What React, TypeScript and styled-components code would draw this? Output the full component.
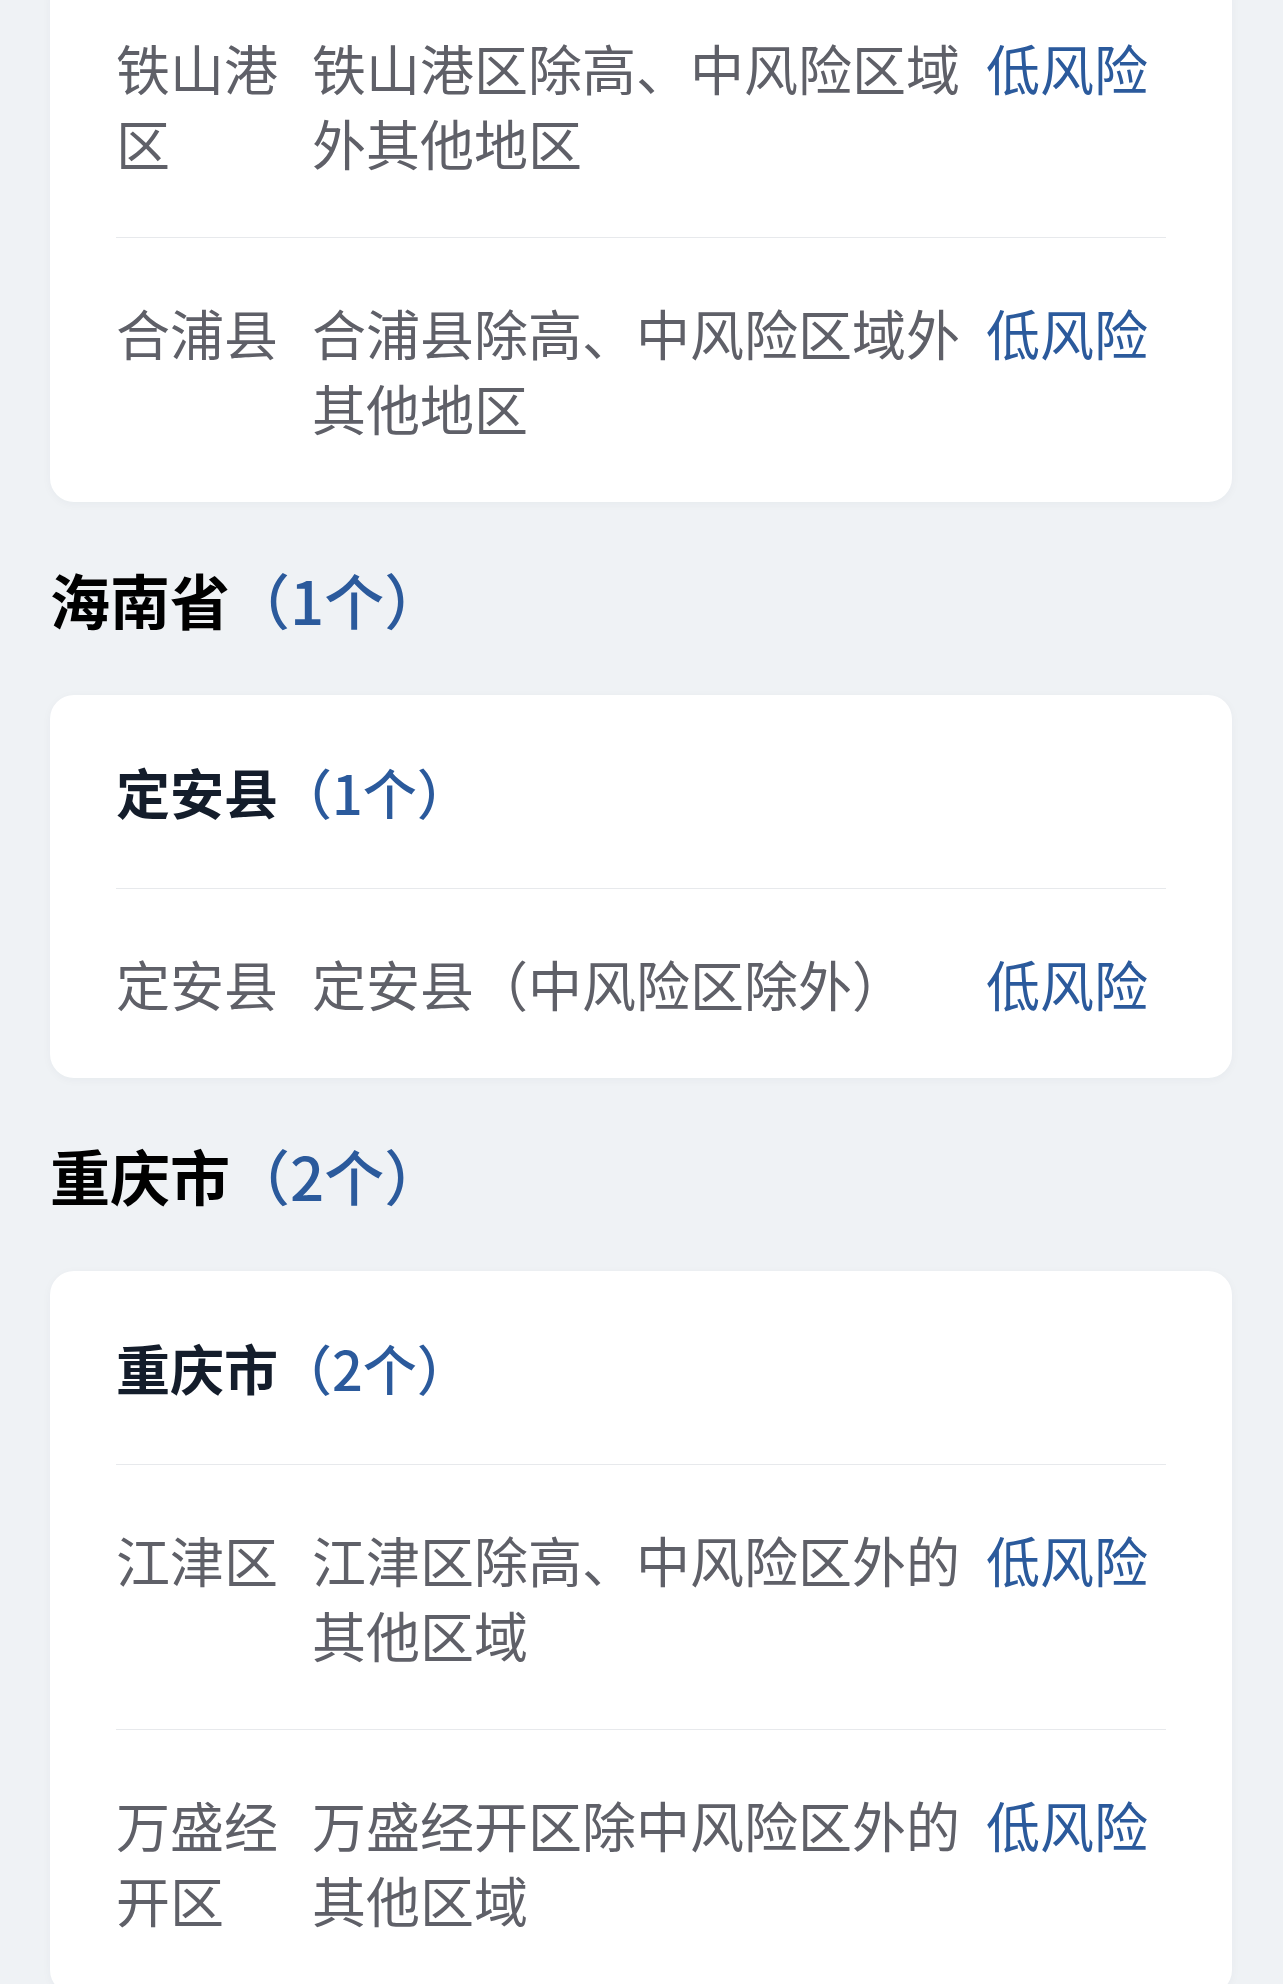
import styled, { createGlobalStyle } from 'styled-components';

const GlobalStyle = createGlobalStyle`
  html, body {
    margin: 0;
    padding: 0;
    background: #eff2f5;
  }
  body {
    font-family: "Noto Sans CJK SC", "Noto Sans", sans-serif;
  }
`;

const Page = styled.div`
  margin-top: -28px;
  padding: 0 51px 0 50px;
  background: #eff2f5;
  min-height: 2100px;
`;

const ProvinceTitle = styled.h2`
  margin: 0;
  padding: 59px 0;
  font-size: 60px;
  line-height: 75px;
  font-weight: 700;
  color: #000;
`;

const Count = styled.span`
  font-weight: 500;
  color: #2b5a9c;
`;

const Card = styled.div`
  background: #fff;
  border-radius: 24px;
  padding: 0 66px;
  box-shadow: 0 2px 10px rgba(30, 50, 80, 0.04);
`;

const CityTitle = styled.div`
  padding: 59px 0;
  font-size: 54px;
  line-height: 75px;
  font-weight: 700;
  color: #141d2b;
`;

const Row = styled.div`
  display: flex;
  align-items: flex-start;
  border-top: 1px solid #e7e9ec;
  padding: 57px 0;
  font-size: 54px;
  line-height: 75px;
  color: #5f6068;
`;

const Area = styled.div`
  width: 163px;
  margin-right: 33px;
  flex-shrink: 0;
`;

const Desc = styled.div`
  flex: 1;
  min-width: 0;
`;

const Level = styled.div`
  width: 180px;
  flex-shrink: 0;
  color: #2b5a9c;
`;

type Item = { area: string; desc: string; level: string };

type City = { name?: string; count?: number; items: Item[] };

type Province = { name?: string; count?: number; cities: City[] };

const data: Province[] = [
  {
    cities: [
      {
        items: [
          { area: '铁山港区', desc: '铁山港区除高、中风险区域外其他地区', level: '低风险' },
          { area: '合浦县', desc: '合浦县除高、中风险区域外其他地区', level: '低风险' },
        ],
      },
    ],
  },
  {
    name: '海南省',
    count: 1,
    cities: [
      {
        name: '定安县',
        count: 1,
        items: [{ area: '定安县', desc: '定安县（中风险区除外）', level: '低风险' }],
      },
    ],
  },
  {
    name: '重庆市',
    count: 2,
    cities: [
      {
        name: '重庆市',
        count: 2,
        items: [
          { area: '江津区', desc: '江津区除高、中风险区外的其他区域', level: '低风险' },
          { area: '万盛经开区', desc: '万盛经开区除中风险区外的其他区域', level: '低风险' },
        ],
      },
    ],
  },
];

const App = () => {
  return (
    <>
      <GlobalStyle />
      <Page>
        {data.map((p, i) => (
          <section key={i}>
            {p.name && (
              <ProvinceTitle>
                {p.name}
                <Count>（{p.count}个）</Count>
              </ProvinceTitle>
            )}
            {p.cities.map((c, j) => (
              <Card key={j}>
                {c.name && (
                  <CityTitle>
                    {c.name}
                    <Count>（{c.count}个）</Count>
                  </CityTitle>
                )}
                {c.items.map((it, k) => (
                  <Row key={k}>
                    <Area>{it.area}</Area>
                    <Desc>{it.desc}</Desc>
                    <Level>{it.level}</Level>
                  </Row>
                ))}
              </Card>
            ))}
          </section>
        ))}
      </Page>
    </>
  );
};

export default App;
